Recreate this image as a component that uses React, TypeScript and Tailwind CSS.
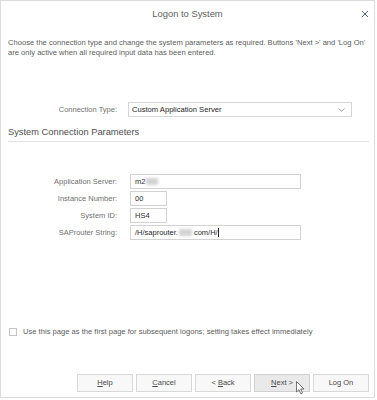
import React from "react";

const labelCls = "text-right text-[#707070] text-[7.5px] leading-[15px]";
const inputCls =
  "h-[15px] border border-[#d2d2d2] bg-white px-[4px] text-[7.5px] leading-[13px] text-[#2a2a2a] flex items-center";

function Blur({ w }: { w: number }) {
  return (
    <span
      className="inline-block h-[7px] bg-[#d2d2d2] blur-[1.5px] mx-[1px]"
      style={{ width: w }}
    />
  );
}

export default function App() {
  const buttons = [
    { label: "Help", u: "H", rest: "elp", pre: "" },
    { label: "Cancel", u: "C", rest: "ancel", pre: "" },
    { label: "< Back", u: "B", rest: "ack", pre: "< " },
    { label: "Next >", u: "N", rest: "ext >", pre: "" },
    { label: "Log On", u: "", rest: "Log On", pre: "" },
  ];

  return (
    <div
      className="relative w-[375px] h-[398px] bg-white border border-[#dcdcdc] flex flex-col"
      style={{ fontFamily: '"Liberation Sans", Arial, sans-serif' }}
    >
      {/* TITLE BAR */}
      <div className="relative h-[26px] flex items-center justify-center">
        <p className="text-[9.4px] text-[#5e5e5e]">Logon to System</p>
        <svg
          className="absolute right-[5px] top-[9px]"
          width="8"
          height="8"
          viewBox="0 0 8 8"
        >
          <path
            d="M1.2 1.2 L6.8 6.8 M6.8 1.2 L1.2 6.8"
            stroke="#4f6983"
            strokeWidth="1"
            strokeLinecap="round"
          />
        </svg>
      </div>

      {/* DESCRIPTION */}
      <p className="mt-[11px] px-[7px] text-[7.6px] leading-[10px] text-[#5c5c5c]">
        Choose the connection type and change the system parameters as required. Buttons 'Next &gt;' and 'Log On'
        <br />
        are only active when all required input data has been entered.
      </p>

      {/* CONNECTION TYPE */}
      <div className="mt-[44px] flex items-center">
        <div className={`w-[116px] ${labelCls}`}>Connection Type:</div>
        <div className="ml-[11px] w-[224px] h-[15px] border border-[#d6d6d6] flex items-center justify-between pl-[3px] pr-[6px]">
          <span className="text-[7.6px] text-[#1e1e1e]">Custom Application Server</span>
          <svg width="7" height="4" viewBox="0 0 7 4">
            <path d="M0.5 0.5 L3.5 3.3 L6.5 0.5" stroke="#8a8a8a" strokeWidth="0.8" fill="none" />
          </svg>
        </div>
      </div>

      {/* SECTION HEADING */}
      <div className="mt-[10px] ml-[7px] mr-[5px] pb-[3px] border-b border-[#e4e4e4]">
        <p className="text-[9.3px] leading-[11px] text-[#4e4e4e]">System Connection Parameters</p>
      </div>

      {/* PARAMETERS */}
      <div className="mt-[32px] grid grid-cols-[116px_auto] gap-x-[13px] gap-y-[2px] items-center">
        <div className={labelCls}>Application Server:</div>
        <div className={`${inputCls} w-[171px]`}>
          m2
          <Blur w={12} />
        </div>

        <div className={labelCls}>Instance Number:</div>
        <div className={`${inputCls} w-[37px]`}>00</div>

        <div className={labelCls}>System ID:</div>
        <div className={`${inputCls} w-[37px]`}>HS4</div>

        <div className={labelCls}>SAProuter String:</div>
        <div className={`${inputCls} w-[171px]`}>
          /H/saprouter.
          <Blur w={13} />
          <span className="ml-[1px]">com/H/</span>
          <span className="inline-block w-[0.7px] h-[9px] bg-[#222] ml-[0.5px]" />
        </div>
      </div>

      {/* CHECKBOX */}
      <div className="mt-[86px] ml-[8px] flex items-center gap-[6px]">
        <span className="w-[8px] h-[8px] border border-[#c4c4c4] bg-white" />
        <span className="text-[7.6px] text-[#5c5c5c]">
          Use this page as the first page for subsequent logons; setting takes effect immediately
        </span>
      </div>

      {/* BUTTONS */}
      <div className="mt-auto mb-[5px] pr-[5px] flex justify-end gap-[3px]">
        {buttons.map((b, i) => (
          <button
            key={i}
            className={`w-[56px] h-[18px] border text-[7.5px] text-[#4a4a4a] flex items-center justify-center ${
              b.label === "Next >"
                ? "bg-[#e9e9e9] border-[#d0d0d0]"
                : "bg-[#f8f8f8] border-[#d8d8d8]"
            }`}
          >
            <span className="whitespace-pre">
              {b.pre}
              {b.u && <span className="underline underline-offset-1">{b.u}</span>}
              {b.rest}
            </span>
          </button>
        ))}
      </div>

      {/* MOUSE CURSOR */}
      <svg
        className="absolute left-[295px] top-[380px]"
        width="9"
        height="14"
        viewBox="0 0 9 14"
      >
        <path
          d="M0.5 0.5 L0.5 11 L3 8.6 L4.8 12.8 L6.4 12.1 L4.7 8 L8 8 Z"
          fill="#fff"
          stroke="#555"
          strokeWidth="0.8"
          strokeLinejoin="round"
        />
      </svg>
    </div>
  );
}
